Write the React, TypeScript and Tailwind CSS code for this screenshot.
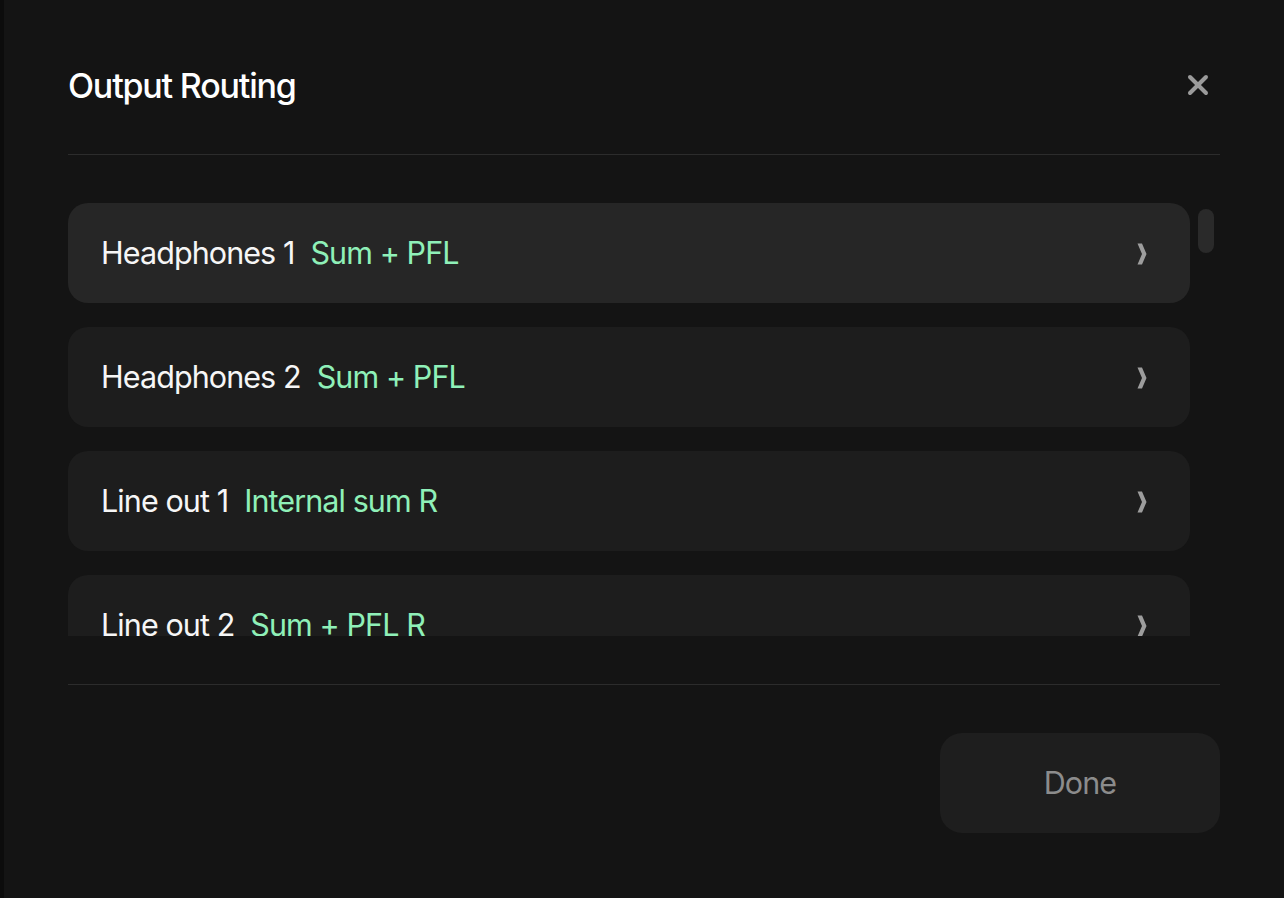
import { X } from "lucide-react";

type Route = { name: string; value: string };

const routes: Route[] = [
  { name: "Headphones 1", value: "Sum + PFL" },
  { name: "Headphones 2", value: "Sum + PFL" },
  { name: "Line out 1", value: "Internal sum R" },
  { name: "Line out 2", value: "Sum + PFL R" },
];

// heavy angle glyph, like ❯
function Chevron() {
  return (
    <svg width="10" height="22" viewBox="0 0 10 22" className="mt-[2px] shrink-0">
      <polygon points="0.5,0.5 5,0.5 9.5,11 5,21.5 0.5,21.5 5,11" fill="#9d9d9d" />
    </svg>
  );
}

function RouteRow({ route, active }: { route: Route; active?: boolean }) {
  return (
    <button
      type="button"
      className={`flex h-[100px] w-full shrink-0 items-center justify-between rounded-[20px] pl-[33px] pr-[43px] text-left ${active ? "bg-[#262626]" : "bg-[#1d1d1d]"}`}
    >
      <span className="flex items-baseline gap-[16px] text-[30.5px] tracking-[-0.03em]">
        <span className="text-[#f6f6f6]">{route.name}</span>
        <span className="text-[#8ff0b8]">{route.value}</span>
      </span>
      <Chevron />
    </button>
  );
}

export default function App() {
  return (
    <div className="flex h-[898px] w-full bg-[#141414] font-['Inter','Noto_Sans',sans-serif]">
      <div className="w-[4px] bg-[#0c0c0c]" />
      <div className="flex flex-1 flex-col px-[64px]">
        <header className="flex h-[155px] shrink-0 items-center justify-between border-b border-[#2c2c2c] pt-[16px]">
          <h2 className="text-[34px] font-medium tracking-[-0.035em] text-white">Output Routing</h2>
          <button type="button" className="mr-[6px] text-[#9b9b9b]">
            <X size={32} strokeWidth={3} />
          </button>
        </header>

        <div className="relative mt-[24px] h-[457px] shrink-0 overflow-hidden">
          <div className="flex flex-col gap-[24px] pr-[30px] pt-[24px]">
            {routes.map((r, i) => (
              <RouteRow key={r.name} route={r} active={i === 0} />
            ))}
          </div>
          <div className="absolute right-[6px] top-[30px] h-[44px] w-[16px] rounded-full bg-[#2a2a2a]" />
        </div>

        <div className="mt-[48px] border-t border-[#2c2c2c]" />

        <div className="mt-[48px] flex justify-end">
          <button type="button" className="h-[100px] w-[280px] rounded-[22px] bg-[#1e1e1e] text-[30.5px] tracking-[-0.03em] text-[#8c8c8c]">
            Done
          </button>
        </div>
      </div>
    </div>
  );
}
